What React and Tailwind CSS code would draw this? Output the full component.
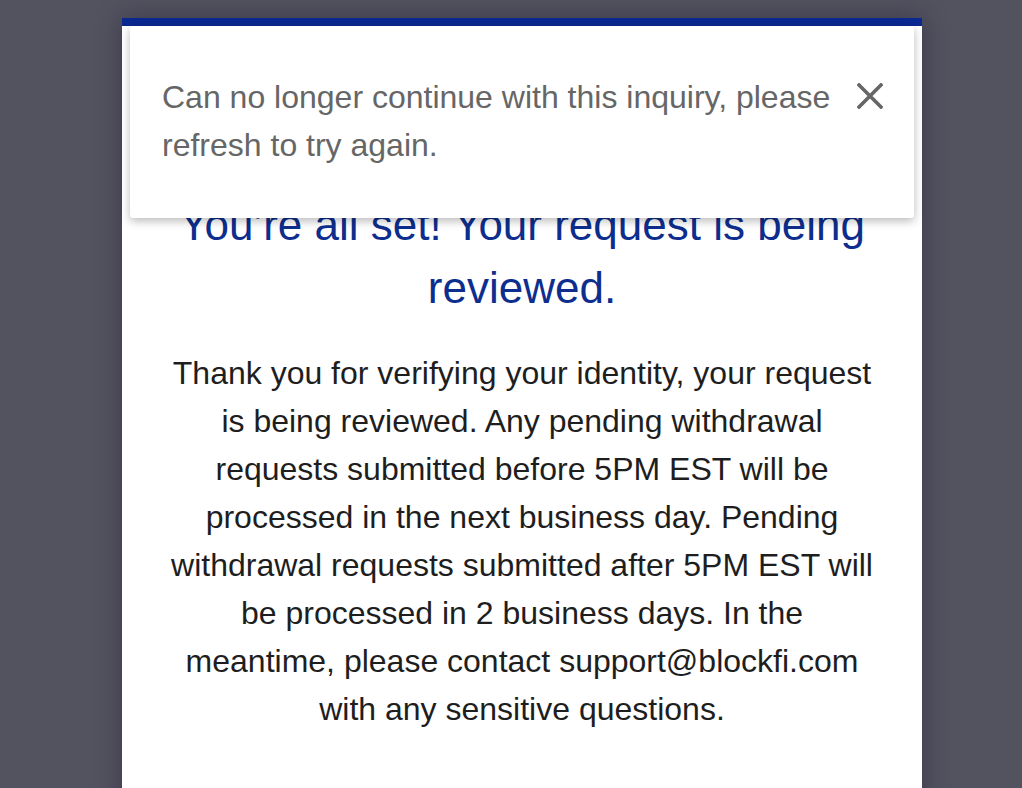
import React from "react";

export default function App() {
  const body = [
    "Thank you for verifying your identity, your request",
    "is being reviewed. Any pending withdrawal",
    "requests submitted before 5PM EST will be",
    "processed in the next business day. Pending",
    "withdrawal requests submitted after 5PM EST will",
    "be processed in 2 business days. In the",
    "meantime, please contact support@blockfi.com",
    "with any sensitive questions.",
  ];
  return (
    <div
      className="relative w-[1022px] h-[788px] overflow-hidden bg-[#53525f]"
      style={{ fontFamily: '"Liberation Sans", Arial, sans-serif' }}
    >
      <div className="ml-[122px] mt-[18px] w-[800px] h-[800px] bg-white border-t-[8px] border-[#0a2890] shadow-[0_0_24px_rgba(30,28,50,0.45)] relative">
        <div className="pt-[167px] text-center">
          <h1 className="text-[44px] leading-[63px] text-[#0d2e8e] font-normal">
            <span className="block whitespace-nowrap">You’re all set! Your request is being</span>
            <span className="block whitespace-nowrap">reviewed.</span>
          </h1>
          <p className="mt-[30px] text-[32px] leading-[48px] text-[#1e1e1e]">
            {body.map((l, i) => (
              <span key={i} className="block whitespace-nowrap">
                {l}
              </span>
            ))}
          </p>
        </div>

        <div className="absolute left-[8px] top-0 w-[784px] h-[192px] bg-white rounded-[3px] shadow-[0_3px_10px_rgba(0,0,0,0.28)] flex items-start pl-[32px] pt-[47px]">
          <p className="w-[687px] text-[32px] leading-[48px] text-[#666666]">
            Can no longer continue with this inquiry, please refresh to try again.
          </p>
          <button className="ml-[8px] mt-[10px] w-[26px] h-[26px] flex items-center justify-center">
            <svg width="26" height="26" viewBox="0 0 26 26" fill="none">
              <path
                d="M2 2 L24 24 M24 2 L2 24"
                stroke="#666666"
                strokeWidth="3.6"
                strokeLinecap="square"
              />
            </svg>
          </button>
        </div>
      </div>
    </div>
  );
}
